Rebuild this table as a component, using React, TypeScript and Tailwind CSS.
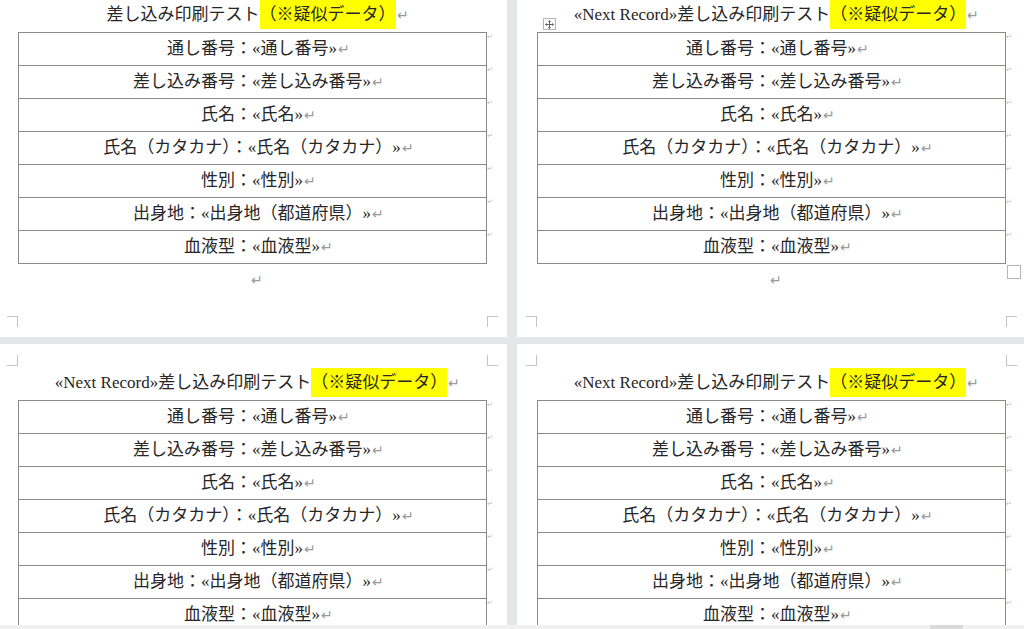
import React from "react";

const rows = [
  ["通し番号", "通し番号"],
  ["差し込み番号", "差し込み番号"],
  ["氏名", "氏名"],
  ["氏名（カタカナ）", "氏名（カタカナ）"],
  ["性別", "性別"],
  ["出身地", "出身地（都道府県）"],
  ["血液型", "血液型"],
];

const font = {
  fontFamily: '"Liberation Serif", "Noto Sans CJK JP", serif',
};

const Ret = () => (
  <span className="text-[14px] text-[#9a9a9a] ml-[1px]">↵</span>
);

const MoveHandle = () => (
  <div className="absolute left-[6px] top-[18px] w-[13px] h-[12px] border border-[#b5b5b5] bg-white flex items-center justify-center">
    <svg width="9" height="9" viewBox="0 0 9 9" fill="none" stroke="#666" strokeWidth="1">
      <path d="M4.5 0.5v8M0.5 4.5h8" />
      <path d="M3.3 1.7l1.2-1.2 1.2 1.2M3.3 7.3l1.2 1.2 1.2-1.2M1.7 3.3L0.5 4.5l1.2 1.2M7.3 3.3l1.2 1.2-1.2 1.2" />
    </svg>
  </div>
);

type PageProps = {
  bottom?: boolean;
  right?: boolean;
  next?: boolean;
};

const Page = ({ bottom, right, next }: PageProps) => {
  const margin = right ? 20 : 18;
  return (
    <div className="relative bg-white w-[507px] h-full overflow-hidden text-[#262626]" style={font}>
      {/* corner marks */}
      {bottom ? (
        <>
          <div className="absolute top-[11px] h-[11px] w-[11px] border-b border-r border-[#c4c4c4]" style={{ left: margin - 11 }} />
          <div className="absolute top-[11px] h-[11px] w-[11px] border-b border-l border-[#c4c4c4]" style={{ left: margin + 469 }} />
        </>
      ) : (
        <>
          <div className="absolute top-[316px] h-[11px] w-[11px] border-t border-r border-[#c4c4c4]" style={{ left: margin - 11 }} />
          <div className="absolute top-[316px] h-[11px] w-[11px] border-t border-l border-[#c4c4c4]" style={{ left: margin + 469 }} />
        </>
      )}

      <div className={bottom ? "pt-[24px]" : ""} style={{ paddingLeft: margin }}>
        <div className="relative w-[469px]">
          {right && !bottom && <MoveHandle />}
          {/* title */}
          <div className="h-[32px] flex justify-center pl-[10px] text-[17px] leading-[29px] whitespace-nowrap">
            <span>
              {next && <span>«Next Record»</span>}
              差し込み印刷テスト
              <span className="bg-[#ffff00] inline-block">（※疑似データ）</span>
              <Ret />
            </span>
          </div>

          {/* table */}
          <div className="relative border-t border-l border-r border-[#8a8a8a] w-[469px]">
            {rows.map(([label, field]) => (
              <div
                key={label}
                className="relative h-[33px] border-b border-[#8a8a8a] flex items-center justify-center pl-[12px] text-[17px] whitespace-nowrap"
              >
                <span>
                  {label}：«{field}»
                  <Ret />
                </span>
                <span className="absolute right-[-7px] top-[0px] text-[7px] leading-[8px] text-[#bdbdbd]">↵</span>
              </div>
            ))}
            {right && !bottom && (
              <div className="absolute right-[-16px] bottom-[-15px] w-[14px] h-[14px] border border-[#b5b5b5] bg-white" />
            )}
          </div>

          {/* empty paragraph */}
          <div className="h-[32px] flex justify-center items-center pl-[8px] text-[14px] text-[#9a9a9a]">↵</div>
        </div>
      </div>
    </div>
  );
};

export default function App() {
  return (
    <div className="w-[1024px] h-[629px] overflow-hidden bg-[#e4e6ea] flex flex-col">
      <div className="h-[337px] flex gap-[10px]">
        <Page />
        <Page right next />
      </div>
      <div className="h-[7px]" />
      <div className="flex-1 flex gap-[10px] overflow-hidden">
        <Page bottom next />
        <Page bottom right next />
      </div>
      <div className="h-[4px] bg-[#f1f1f1] relative">
        <div className="absolute left-[930px] w-[33px] h-[4px] bg-[#dadada]" />
      </div>
    </div>
  );
}
